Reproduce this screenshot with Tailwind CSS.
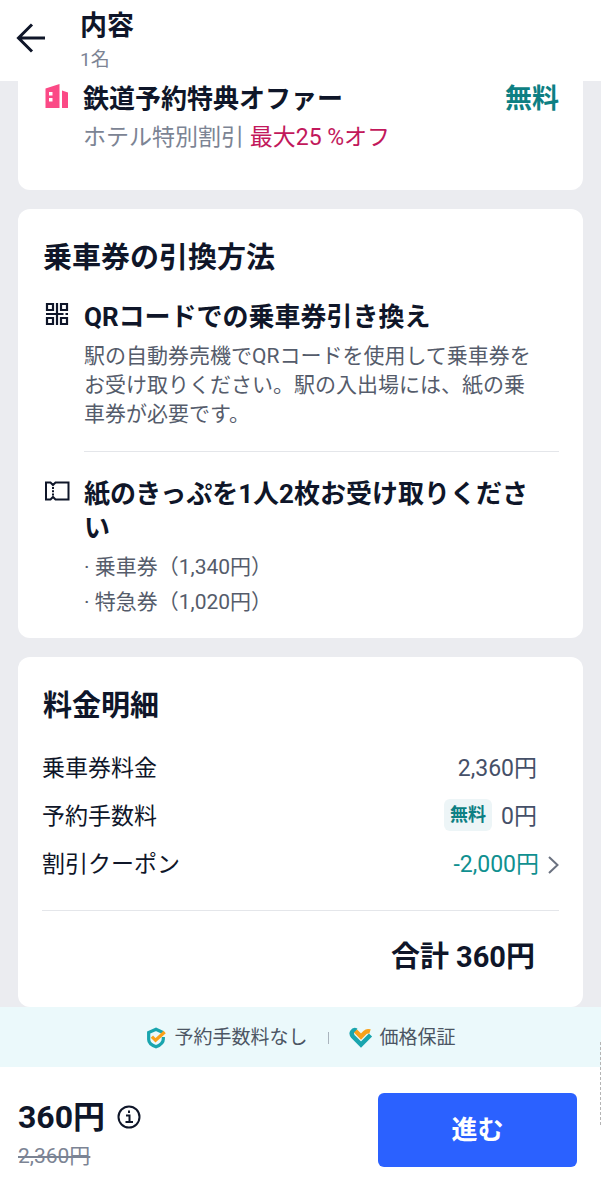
<!DOCTYPE html>
<html lang="ja">
<head>
<meta charset="utf-8">
<meta name="viewport" content="width=device-width, initial-scale=1">
<title>内容</title>
<script src="https://cdn.jsdelivr.net/npm/@tailwindcss/browser@4"></script>
</head>
<body class="relative flex min-h-screen flex-col bg-[#ebecf0] font-['Roboto','Noto_Sans_CJK_JP',sans-serif] text-[#0f1629]">
  <header class="flex h-[81px] items-center bg-white pt-[3px] pl-4">
    <button type="button" aria-label="戻る" class="mr-8 -mt-2 h-8 w-8">
      <svg viewBox="0 0 32 32" class="h-8 w-8" fill="none" stroke="#0f1629" stroke-width="3"><path d="M29 16H3M16 2.500 2.500 16 16 29.500"/></svg>
    </button>
    <div>
      <h1 class="text-[27px] leading-9 font-bold">内容</h1>
      <p class="text-[19px] leading-8 text-[#7c8494]">1名</p>
    </div>
  </header>

  <main class="flex flex-1 flex-col gap-[19px] px-[18px]">
    <section class="flex rounded-b-xl bg-white px-6 pb-9">
      <div class="w-[41px] shrink-0 pt-[3px] pl-[3px]">
        <svg viewBox="0 0 24 24" class="h-6 w-6" fill="#fb4a86"><path fill-rule="evenodd" d="M.5 4.500 14.500 0V24H.5ZM4 8v3.500h3.500V8Zm0 6v3.500h3.500V14Z"/><path d="M17 6.500 23 8.500V24H17Z"/></svg>
      </div>
      <div class="flex-1">
        <div class="flex items-center justify-between">
          <h2 class="text-[26px] leading-9 font-bold">鉄道予約特典オファー</h2>
          <span class="text-[27px] leading-9 font-bold text-[#0d7f83]">無料</span>
        </div>
        <p class="pt-[5px] text-[23px] leading-8 text-[#7c8494]">ホテル特別割引 <span class="text-[#c2185b]">最大25 %オフ</span></p>
      </div>
    </section>

    <section class="rounded-xl bg-white px-6 pt-[26px] pb-[18px]">
      <h2 class="pl-px pb-[15px] text-[29px] leading-[46px] font-bold">乗車券の引換方法</h2>
      <div class="flex">
        <div class="w-[42px] shrink-0 pt-[6px] pl-[3px]">
          <svg viewBox="0 0 24 24" class="h-6 w-6" fill="none" stroke="#0f1629" stroke-width="2.200"><path d="M2 2H8V8H2ZM16 2H22V8H16ZM2 16H8V22H2ZM16 16H22V22H16ZM12 1V23M1 12H18.500M20.500 12H23"/></svg>
        </div>
        <div class="flex-1">
          <h3 class="text-[26px] leading-[42px] font-bold">QRコードでの乗車券引き換え</h3>
          <p class="mb-[22px] pt-1 pr-5 text-[21px] leading-[29px] text-[#555c6b]">駅の自動券売機でQRコードを使用して乗車券をお受け取りください。駅の入出場には、紙の乗車券が必要です。</p>
          <hr class="border-[#e4e6ea]">
        </div>
      </div>
      <div class="flex pt-[25px]">
        <div class="w-[42px] shrink-0 pt-[4px] pl-[2px]">
          <svg viewBox="0 0 26 20" class="h-5 w-[26px]" fill="none" stroke="#0f1629" stroke-width="2"><path d="M2 1.500H6.500L9 4 11.500 1.500H24.500V18.500H11.500L9 16 6.500 18.500H2Z"/><path d="M9 6V14.500" stroke-dasharray="2 1.200"/></svg>
        </div>
        <div class="flex-1">
          <h3 class="pr-5 text-[26px] leading-[34px] font-bold">紙のきっぷを1人2枚お受け取りください</h3>
          <ul class="pt-[5px] text-[21px] leading-[35px] text-[#555c6b]">
            <li>· 乗車券（1,340円）</li>
            <li>· 特急券（1,020円）</li>
          </ul>
        </div>
      </div>
    </section>

    <section class="rounded-xl bg-white px-6 pt-[26px] pb-[27px]">
      <h2 class="pl-px pb-4 text-[29px] leading-[46px] font-bold">料金明細</h2>
      <dl class="text-[23px] leading-[48px]">
        <div class="flex justify-between"><dt>乗車券料金</dt><dd class="pr-[22px] text-[#455068]">2,360円</dd></div>
        <div class="flex justify-between"><dt>予約手数料</dt><dd class="flex items-center pr-[22px] text-[#455068]"><span class="mr-[9px] mb-1 rounded-md bg-[#edf5f7] px-[6px] text-[18px] leading-8 font-bold text-[#0d7f83]">無料</span>0円</dd></div>
        <div class="flex justify-between"><dt>割引クーポン</dt><dd><button type="button" class="flex items-center gap-2 text-[#109090]">-2,000円<svg viewBox="0 0 12 20" class="h-5 w-3" fill="none" stroke="#6b7280" stroke-width="2"><path d="M2 2 10.500 10 2 18"/></svg></button></dd></div>
      </dl>
      <hr class="mt-[21px] border-[#e4e6ea]">
      <p class="pt-[23px] pr-6 text-right text-[29px] leading-[46px] font-bold">合計 360円</p>
    </section>
  </main>

  <footer class="bg-white">
    <div class="flex h-[60px] items-center justify-center bg-[#ebf9fb] pt-[2px] text-[19px] text-[#4b5563]">
      <svg viewBox="0 0 22 24" class="mr-[7px] h-[22px] w-[22px]" fill="none" stroke-width="3.500"><path d="M18.500 6 11 2.500 3 6V13.500C3 17.500 7 20 11 21.500 15 20 19 17.500 19 13V11" stroke="#19a5ae"/><path d="M6.500 10.500 10.500 14.500 20.500 5.500" stroke="#f9a11b"/></svg>
      <span>予約手数料なし</span>
      <span class="mr-5 ml-5 h-3 w-px bg-[#aab4bd]"></span>
      <svg viewBox="0 0 24 22" class="mr-[7px] h-[22px] w-6" fill="none" stroke-width="4.500"><path d="M7.500 3.500C4 2 1 6 4 9.500L12 17.500 21.500 8" stroke="#19a5ae"/><path d="M6.500 4 12 9.500 16 5.500Q18 3.500 21 4.500" stroke="#f9a11b"/></svg>
      <span>価格保証</span>
    </div>
    <div class="flex h-[133px] items-start justify-between pt-[26px] pr-6 pl-[18px]">
      <div>
        <div class="flex items-center gap-3 pt-px">
          <strong class="text-[32px] leading-[46px] font-bold">360円</strong>
          <button type="button" aria-label="料金の詳細" class="h-6 w-6">
            <svg viewBox="0 0 24 24" class="h-6 w-6" fill="none" stroke="#0f1629" stroke-width="2"><circle cx="12" cy="12" r="10.500"/><path d="M9 10.500H12.500V17M8.500 17H16M12 5.500V8"/></svg>
          </button>
        </div>
        <s class="block text-[21px] leading-8 text-[#7c8494]">2,360円</s>
      </div>
      <button type="button" class="h-[74px] w-[199px] rounded-md bg-[#2b61ff] text-[26px] font-bold text-white">進む</button>
    </div>
  </footer>
  <div class="absolute right-0 bottom-[75px] h-[83px] border-r border-dashed border-[#b5b5b5]"></div>
</body>
</html>
